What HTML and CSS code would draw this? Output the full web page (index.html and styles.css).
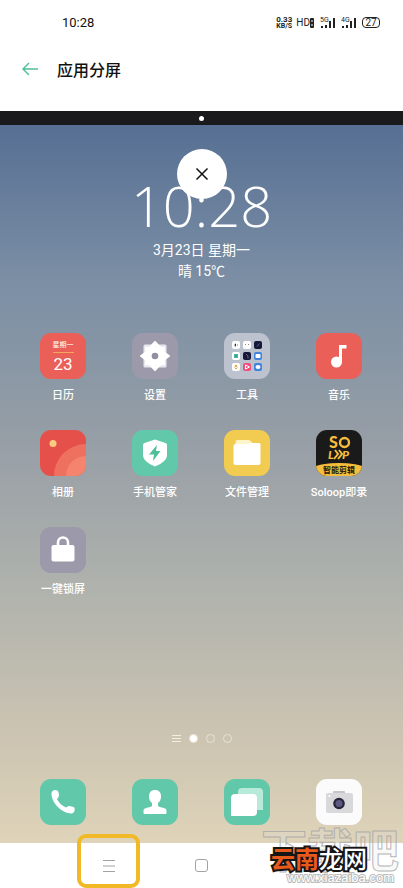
FILE: index.html
```html
<!DOCTYPE html>
<html lang="zh-CN">
<head>
  <meta charset="UTF-8" />
  <meta name="viewport" content="width=device-width, initial-scale=1.0"/>
  <title>应用分屏</title>
  <link rel="stylesheet" href="styles.css">
</head>
<body>

<header>
  <div class="status">
    <span class="status-time">10:28</span>
    <div class="status-icons">
      <span class="speed"><b>0.33</b><b>KB/S</b></span>
      <span class="hd">HD</span>
      <svg class="sim" width="4" height="10" viewBox="0 0 4 10">
        <rect width="4" height="10" rx="1" fill="#222"/>
        <path d="M1.500 2h1v2h-1zM1.500 6h1v2h-1z" fill="#fff"/>
      </svg>
      <span class="signal"><small>5G</small>
        <svg width="15" height="10" viewBox="0 0 15 10" fill="#222"><path d="M1 8h2v2H1zM5 7h2v3H5zM9 3h2v7H9zM13 0h2v10h-2z"/></svg>
      </span>
      <span class="signal"><small>4G</small>
        <svg width="15" height="10" viewBox="0 0 15 10" fill="#222"><path d="M1 8h2v2H1zM5 7h2v3H5zM9 3h2v7H9zM13 0h2v10h-2z"/></svg>
      </span>
      <span class="battery">27</span>
    </div>
  </div>
  <div class="title-bar">
    <button class="back" aria-label="返回">
      <svg width="18" height="14" viewBox="0 0 18 14" fill="none" stroke="#4fbf9b" stroke-width="1.4"><path d="M16 7H1M7 1L1 7l6 6"/></svg>
    </button>
    <h1>应用分屏</h1>
  </div>
</header>

<div class="divider"><span class="handle"></span></div>

<main class="home">
  <button class="close" aria-label="关闭">
    <svg width="14" height="14" viewBox="0 0 14 14" stroke="#111" stroke-width="1.5"><path d="M1.500 1.500l11 11M12.500 1.500l-11 11"/></svg>
  </button>

  <section class="clock">
    <div class="clock-time">10:28</div>
    <p>3月23日 星期一</p>
    <p>晴 15℃</p>
  </section>

  <section class="apps">
    <a class="app" href="#">
      <span class="icon red calendar"><small>星期一</small><strong>23</strong></span>
      <span class="label">日历</span>
    </a>
    <a class="app" href="#">
      <span class="icon gray">
        <svg viewBox="0 0 46 46" stroke-linejoin="round">
          <path d="M13 13h20v20H13z" fill="#e9e8ee" stroke="#e9e8ee" stroke-width="3"/>
          <path d="M23 9l5 5.500 4 .500-.500 4L37 23l-5.500 4 .500 4-4 .500-5 5.500-5-5.500-4-.500.500-4L9 23l5.500-4-.500-4 4-.500z" fill="#fff" stroke="#fff" stroke-width="2"/>
          <circle cx="23" cy="23" r="3.300" fill="#918fa1"/>
        </svg>
      </span>
      <span class="label">设置</span>
    </a>
    <a class="app" href="#">
      <span class="icon folder">
        <svg viewBox="0 0 46 46">
          <g fill="#fff">
            <rect x="8" y="8" width="8" height="8" rx="2"/>
            <rect x="19" y="8" width="8" height="8" rx="2"/>
            <rect x="8" y="19" width="8" height="8" rx="2"/>
            <rect x="8" y="30" width="8" height="8" rx="2"/>
          </g>
          <g fill="#171838">
            <rect x="30" y="8" width="8" height="8" rx="2"/>
            <rect x="19" y="19" width="8" height="8" rx="2"/>
          </g>
          <rect x="19" y="30" width="8" height="8" rx="2" fill="#f0507c"/>
          <rect x="30" y="19" width="8" height="8" rx="2" fill="#4284dc"/>
          <rect x="30" y="30" width="8" height="8" rx="2" fill="#4284dc"/>
          <path d="M12 10.500a1.500 1.500 0 0 0 0 3z" fill="#333"/>
          <path d="M13 11.500h1v1h-1zM21 11h1v1h-1zM24 11h1v1h-1z" fill="#888"/>
          <path d="M33 13.500l2.500-3M22 21l2 2v2.500" stroke="#66658c" fill="none"/>
          <path d="M10 21h4v4h-4z" fill="#43b9a4"/>
          <path d="M11.500 23.500l1-1.500" stroke="#16786d"/>
          <circle cx="12" cy="33" r="1.300" fill="#eba34c"/>
          <path d="M10.500 34.500l1.500 1.500 1.500-1.500" stroke="#eba34c" fill="none"/>
          <path d="M21.500 32l4 2-4 2z" stroke="#fff" fill="none"/>
          <rect x="31.500" y="21" width="5" height="4" rx="1" fill="#fff"/>
          <ellipse cx="34" cy="34" rx="2.500" ry="2" fill="#fff"/>
        </svg>
      </span>
      <span class="label">工具</span>
    </a>
    <a class="app" href="#">
      <span class="icon red">
        <svg viewBox="0 0 46 46" fill="#fff"><circle cx="20.500" cy="29" r="5.500"/><path d="M23 12h7.500v3.500H26V29h-3z"/></svg>
      </span>
      <span class="label">音乐</span>
    </a>
    <a class="app" href="#">
      <span class="icon album">
        <svg viewBox="0 0 46 46">
          <circle cx="46" cy="46" r="32" fill="#ee705e"/>
          <circle cx="46" cy="46" r="20" fill="#f4846d"/>
          <circle cx="13" cy="13.500" r="3.500" fill="#fbcb83"/>
        </svg>
      </span>
      <span class="label">相册</span>
    </a>
    <a class="app" href="#">
      <span class="icon green">
        <svg viewBox="0 0 46 46">
          <path d="M23 9.500l10.500 3.500q1.500.500 1.500 2v10c0 5-5 8.500-12 11.500-7-3-12-6.500-12-11.500V15q0-1.500 1.500-2z" fill="#fff"/>
          <path d="M25 15l-8 9.500h5L21 31l7.500-10H24z" fill="#50be99"/>
        </svg>
      </span>
      <span class="label">手机管家</span>
    </a>
    <a class="app" href="#">
      <span class="icon yellow">
        <svg viewBox="0 0 46 46">
          <path d="M11.500 12q0-2 2-2h11q1 0 2 1l2 2h6q1.500 0 1.500 1.500V30H11.500z" fill="#fff3ca"/>
          <path d="M9.500 16q0-2 2-2h13.500l2-1h8q1.500 0 1.500 1.500V33q0 2-2 2h-23q-2 0-2-2z" fill="#fff"/>
        </svg>
      </span>
      <span class="label">文件管理</span>
    </a>
    <a class="app" href="#">
      <span class="icon soloop">
        <svg viewBox="0 0 46 46">
          <ellipse cx="23" cy="51" rx="42" ry="18" fill="#f5bd3c"/>
          <g fill="#f5bd3c" font-family="Lato, sans-serif" font-weight="900">
            <text x="13" y="18" font-size="16">S</text>
            <text x="12" y="29" font-size="12" font-style="italic">L</text>
            <text x="26" y="29" font-size="12" font-style="italic">P</text>
          </g>
          <circle cx="28.500" cy="12.500" r="4.500" fill="none" stroke="#f5bd3c" stroke-width="2.400"/>
          <path d="M19 20l3 4-4 5M23 20l3 4-4 5" fill="none" stroke="#f5bd3c" stroke-width="2"/>
          <text x="23" y="43" font-size="8" font-weight="700" text-anchor="middle" fill="#20190a">智能剪辑</text>
        </svg>
      </span>
      <span class="label">Soloop即录</span>
    </a>
    <a class="app" href="#">
      <span class="icon gray">
        <svg viewBox="0 0 46 46">
          <path d="M18 20v-4.500a5 5 0 0 1 10 0V20" fill="none" stroke="#fff" stroke-width="2.600"/>
          <rect x="11.500" y="18" width="23" height="16.500" rx="2" fill="#fff"/>
        </svg>
      </span>
      <span class="label">一键锁屏</span>
    </a>
  </section>

  <div class="pager">
    <svg width="9" height="9" viewBox="0 0 9 9" stroke="#f3eee2"><path d="M0 1.500h9M0 4.500h9M0 7.500h9"/></svg>
    <span class="dot active"></span>
    <span class="dot"></span>
    <span class="dot"></span>
  </div>

  <section class="dock">
    <a class="icon green" href="#" aria-label="电话">
      <svg viewBox="0 0 46 46"><path d="M12 12.500q1-1.500 3-1.500 3 0 3.500 2l.500 3.500q0 1.500-2 3.500 2 5 9 8.500 2-1.800 3.500-1.500l4 1q1.500.500 1.200 2.500-.2 4-3.700 4C21 34 11 23 11.500 14z" fill="#fff"/></svg>
    </a>
    <a class="icon green" href="#" aria-label="联系人">
      <svg viewBox="0 0 46 46"><path d="M23 11c4 0 6 2.500 6 6.500 0 3-1 5-3 6.500v3q1 1.300 5 1.700 3.500.500 3.500 3V34q0 1-1 1h-21q-1 0-1-1v-2.300q0-2.500 3.500-3 4-.400 5-1.700v-3c-2-1.500-3-3.500-3-6.500 0-4 2-6.500 6-6.500z" fill="#fff"/></svg>
    </a>
    <a class="icon green" href="#" aria-label="短信">
      <svg viewBox="0 0 46 46">
        <path d="M18 9h17q4 0 4 4v18H18q-4 0-4-4V13q0-4 4-4z" fill="#b7ead8"/>
        <path d="M11 15h18q4 0 4 4v14q0 4-4 4H7V19q0-4 4-4z" fill="#fff"/>
      </svg>
    </a>
    <a class="icon white" href="#" aria-label="相机">
      <svg viewBox="0 0 46 46">
        <rect x="17" y="12" width="12" height="4" rx="1" fill="#c6c6ca"/>
        <rect x="10" y="14" width="27" height="20" rx="2" fill="#d9d9dc"/>
        <circle cx="13.500" cy="17" r="1" fill="#fff"/>
        <circle cx="23" cy="24.500" r="5.800" fill="#28253d"/>
        <circle cx="23" cy="24.500" r="3.500" fill="#5e5983"/>
      </svg>
    </a>
  </section>
</main>

<nav class="nav-bar">
  <button class="menu-key" aria-label="最近任务">
    <svg width="12" height="12" viewBox="0 0 12 12" stroke="#a2a2a2"><path d="M0 .500h12M0 6h12M0 11.500h12"/></svg>
  </button>
  <button class="home-key" aria-label="主屏幕">
    <svg width="13" height="13" viewBox="0 0 13 13" fill="none" stroke="#a2a2a2"><rect x=".500" y=".500" width="12" height="12" rx="2.500"/></svg>
  </button>
</nav>

<div class="highlight"></div>
<div class="watermark">
  <span class="wm-big">下载吧</span>
  <span class="wm-url">www.xiazaiba.com</span>
  <span class="wm-name"><em>云南</em>龙网</span>
</div>

</body>
</html>
```

FILE: styles.css
```css
* {
  box-sizing: border-box;
}

body {
  display: flex;
  flex-direction: column;
  position: relative;
  min-height: 100vh;
  margin: 0;
  overflow-x: hidden;
  font-family: Roboto, "Noto Sans CJK SC", sans-serif;
  background: #fff;
  color: #111;
}

button {
  padding: 0;
  border: 0;
  background: none;
  cursor: pointer;
}

a {
  color: inherit;
  text-decoration: none;
}

svg {
  display: block;
}

header {
  height: 111px;
}

.status {
  display: flex;
  align-items: center;
  justify-content: space-between;
  height: 45px;
  padding: 0 23px 0 62px;
}

.status-time {
  font-size: 13px;
}

.status-icons {
  display: flex;
  align-items: center;
  color: #222;
}

.speed {
  display: flex;
  flex-direction: column;
  align-items: center;
  margin-right: 4px;
  font-size: 7px;
  line-height: 6px;
}

.speed b:first-child {
  font-size: 8px;
}

.hd {
  font-size: 10px;
}

.signal {
  position: relative;
  margin-left: 6px;
}

.signal small {
  position: absolute;
  left: 0;
  top: -1px;
  font-size: 7px;
  line-height: 7px;
}

.battery {
  width: 18px;
  margin-left: 6px;
  border: 1px solid #222;
  border-radius: 4px;
  font-size: 10px;
  line-height: 9px;
  text-align: center;
}

.title-bar {
  display: flex;
  align-items: center;
  gap: 17px;
  height: 47px;
  padding: 0 22px;
}

.title-bar h1 {
  margin: 0;
  font-size: 16px;
  font-weight: 500;
}

.divider {
  display: flex;
  align-items: center;
  justify-content: center;
  height: 14px;
  background: #1a1a1c;
}

.handle {
  width: 5px;
  height: 5px;
  border-radius: 50%;
  background: #fff;
}

.home {
  display: flex;
  flex-direction: column;
  flex: 1;
  position: relative;
  padding-bottom: 18px;
  background: linear-gradient(#566f93 0%, #7c8fa5 22%, #8796a5 32%, #989fa6 45%, #acb0ac 62%, #cdc5b2 86%, #dfd4b9 100%);
  color: #fff;
}

/* sits over the clock */
.close {
  display: flex;
  align-items: center;
  justify-content: center;
  position: absolute;
  top: 24px;
  left: 50%;
  width: 50px;
  height: 50px;
  margin-left: -25px;
  border-radius: 50%;
  background: #fff;
}

.clock {
  padding-top: 49px;
  text-align: center;
}

.clock-time {
  margin-bottom: 4px;
  font-family: "Open Sans", sans-serif;
  font-size: 56px;
  font-weight: 300;
  line-height: 62px;
}

.clock p {
  margin: 0;
  font-size: 14px;
  line-height: 21px;
}

.apps {
  display: grid;
  grid-template-columns: repeat(4, 1fr);
  gap: 26px 0;
  margin-top: 51px;
  padding: 0 18px 0 17px;
}

.app {
  display: flex;
  flex-direction: column;
  align-items: center;
  gap: 9px;
}

.label {
  font-size: 11px;
  font-weight: 500;
  line-height: 16px;
}

.icon {
  display: block;
  width: 46px;
  height: 46px;
  border-radius: 11px;
  overflow: hidden;
}

.red {
  background: #ea5f57;
}

.gray {
  background: #9b99aa;
}

.green {
  background: #62c8aa;
}

.yellow {
  background: #f2cb51;
}

.white {
  background: #fbfbfb;
}

.folder {
  background: #bcc3ce;
}

.album {
  background: #e6504a;
}

.soloop {
  background: #1b1a1b;
}

.calendar {
  display: flex;
  flex-direction: column;
  align-items: center;
  padding-top: 6px;
}

.calendar small {
  border-bottom: 1px solid #f6a65e;
  font-size: 7px;
  line-height: 13px;
}

.calendar strong {
  font-size: 17px;
  font-weight: 400;
  line-height: 23px;
}

.pager {
  display: flex;
  align-items: center;
  justify-content: center;
  gap: 8px;
  height: 10px;
  margin: auto 0 36px;
}

.dot {
  width: 9px;
  height: 9px;
  border: 1px solid #e9e3d6;
  border-radius: 50%;
}

.dot.active {
  background: #fff;
}

.dock {
  display: grid;
  grid-template-columns: repeat(4, 1fr);
  justify-items: center;
  padding: 0 18px 0 17px;
}

.nav-bar {
  display: grid;
  grid-template-columns: 1fr 1fr 1fr;
  align-items: center;
  height: 45px;
  padding: 0 62px;
}

.nav-bar button {
  display: flex;
  justify-content: center;
}

.highlight {
  position: absolute;
  left: 77px;
  bottom: 0;
  width: 63px;
  height: 54px;
  border: 4px solid #f0b925;
  border-radius: 9px;
}

.watermark {
  position: absolute;
  right: 0;
  bottom: 0;
  width: 144px;
  height: 66px;
  white-space: nowrap;
}

.watermark span {
  position: absolute;
}

.wm-big {
  left: 2px;
  top: -3px;
  font-size: 46px;
  font-weight: 700;
  line-height: 64px;
  color: rgba(225, 225, 225, 0.2);
  -webkit-text-stroke: 1px rgba(165, 165, 165, 0.8);
}

.wm-url {
  right: 9px;
  bottom: 2px;
  font-family: "Liberation Sans", sans-serif;
  font-size: 13px;
  line-height: 16px;
  color: #fff;
  -webkit-text-stroke: 2px #bbb;
  paint-order: stroke fill;
}

.wm-name {
  left: 12px;
  top: 23px;
  font-size: 24px;
  font-weight: 500;
  line-height: 30px;
  color: #fff;
  -webkit-text-stroke: 4px #161616;
  paint-order: stroke fill;
}

.wm-name em {
  font-style: normal;
  font-weight: 700;
  color: #e8591c;
}
```
